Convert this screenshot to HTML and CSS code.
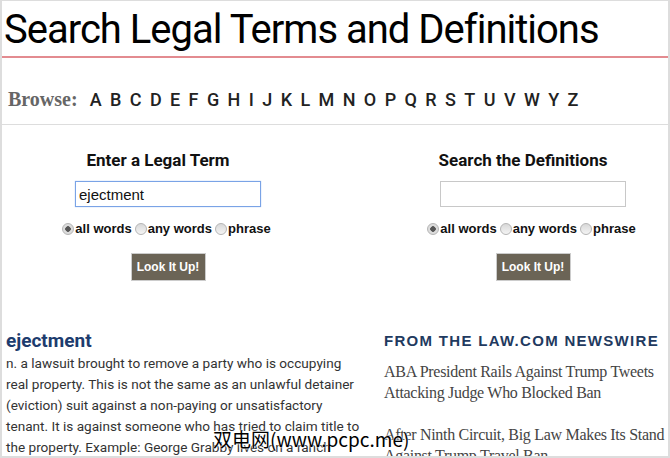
FILE: index.html
```html
<!DOCTYPE html>
<html lang="en">
<head>
    <meta charset="UTF-8">
    <title>Search Legal Terms and Definitions</title>
    <link rel="stylesheet" href="styles.css">
</head>
<body>
    <div class="page">
        <h1 class="title">Search Legal Terms and Definitions</h1>

        <div class="browse">
            <span class="browse-label">Browse:</span>
            <a href="#">A</a><a href="#">B</a><a href="#">C</a><a href="#">D</a><a href="#">E</a><a href="#">F</a><a href="#">G</a><a href="#">H</a><a href="#">I</a><a href="#">J</a><a href="#">K</a><a href="#">L</a><a href="#">M</a><a href="#">N</a><a href="#">O</a><a href="#">P</a><a href="#">Q</a><a href="#">R</a><a href="#">S</a><a href="#">T</a><a href="#">U</a><a href="#">V</a><a href="#">W</a><a href="#">Y</a><a href="#">Z</a>
        </div>

        <div class="search">
            <form class="search-box">
                <h3>Enter a Legal Term</h3>
                <input type="text" class="term-input focused" value="ejectment">
                <div class="options">
                    <label><input type="radio" name="t1" checked>all words</label>
                    <label><input type="radio" name="t1">any words</label>
                    <label><input type="radio" name="t1">phrase</label>
                </div>
                <button type="submit">Look It Up!</button>
            </form>
            <form class="search-box right">
                <h3>Search the Definitions</h3>
                <input type="text" class="term-input">
                <div class="options">
                    <label><input type="radio" name="t2" checked>all words</label>
                    <label><input type="radio" name="t2">any words</label>
                    <label><input type="radio" name="t2">phrase</label>
                </div>
                <button type="submit">Look It Up!</button>
            </form>
        </div>

        <div class="results">
            <div class="definition">
                <h2>ejectment</h2>
                <p>n. a lawsuit brought to remove a party who is occupying real property. This is not the same as an unlawful detainer (eviction) suit against a non-paying or unsatisfactory tenant. It is against someone who has tried to claim title to the property. Example: George Grabby lives on a ranch</p>
            </div>
            <div class="news">
                <h4>FROM THE LAW.COM NEWSWIRE</h4>
                <a href="#">ABA President Rails Against Trump Tweets Attacking Judge Who Blocked Ban</a>
                <a href="#">After Ninth Circuit, Big Law Makes Its Stand Against Trump Travel Ban</a>
            </div>
        </div>

        <span class="watermark">双电网(www.pcpc.me)</span>
    </div>
</body>
</html>
```

FILE: styles.css
```css
body {
    margin: 0;
    background: #fff;
    font-family: Roboto, Arial, sans-serif;
}
.page {
    position: relative;
    height: 455px;
    overflow: hidden;
    border-top: 1px solid #ddd;
    border-left: 2px solid #ddd;
    border-right: 2px solid #ddd;
    border-bottom: 2px solid #ddd;
}
.title {
    margin: 0;
    padding: 5px 0 0 2px;
    height: 50px;
    font-size: 40px;
    font-weight: 400;
    letter-spacing: -1px;
    color: #000;
    border-bottom: 2px solid #e38b90;
}
.browse {
    height: 50px;
    padding: 16px 0 0 6px;
    display: flex;
    align-items: center;
    border-bottom: 1px solid #ddd;
}
.browse-label {
    font-family: "Liberation Serif", serif;
    font-weight: bold;
    font-size: 20px;
    color: #666;
    margin-right: 12px;
}
.browse a {
    font-size: 18px;
    font-weight: 500;
    color: #222;
    text-decoration: none;
    margin-right: 8.4px;
}
.search {
    display: grid;
    grid-template-columns: 332px 1fr;
    padding-top: 24px;
    height: 170px;
}
.search-box {
    display: flex;
    flex-direction: column;
    align-items: center;
}
.search-box.right {
    padding-left: 64px;
}
.search-box h3 {
    margin: 0 20px 0 0;
    font-size: 17px;
    font-weight: 700;
    color: #111;
    line-height: 22px;
}
.term-input {
    box-sizing: border-box;
    width: 186px;
    height: 26px;
    margin-top: 10px;
    padding: 0 3px;
    border: 1px solid #c8c8c8;
    font-family: Arial, "Liberation Sans", sans-serif;
    font-size: 15px;
    color: #111;
    outline: none;
}
.term-input.focused {
    border-color: #7aa3e6;
    box-shadow: 0 0 1px #9bbdf0;
}
.options {
    display: flex;
    margin-top: 14px;
}
.options label {
    display: flex;
    align-items: center;
    font-family: Arial, "Liberation Sans", sans-serif;
    font-weight: bold;
    font-size: 13px;
    color: #111;
    margin-right: 3px;
}
.options input {
    appearance: none;
    width: 12px;
    height: 12px;
    margin: 0 1px 0 0;
    border: 1px solid #b5b5b5;
    border-radius: 50%;
    background: linear-gradient(#d8d8d8, #f4f4f4);
}
.options input:checked {
    background: radial-gradient(circle, #555 0 2.5px, #dcdcdc 3px);
}
.search-box button {
    margin-top: 17px;
    width: 75px;
    height: 28px;
    padding: 0;
    border: 1px solid #ccc;
    background: #6b6456;
    color: #fff;
    font-family: Arial, "Liberation Sans", sans-serif;
    font-weight: bold;
    font-size: 12px;
}
.results {
    display: grid;
    grid-template-columns: 356px 1fr;
    gap: 22px;
    padding: 10px 0 0 4px;
}
.definition h2 {
    margin: 0;
    font-size: 19px;
    font-weight: 700;
    color: #1d3c6e;
    line-height: 24px;
}
.definition p {
    margin: 0;
    font-size: 13.6px;
    line-height: 21px;
    color: #333;
}
.news h4 {
    margin: 2px 0 10px;
    font-family: Arial, "Liberation Sans", sans-serif;
    font-size: 15px;
    font-weight: bold;
    letter-spacing: 1.3px;
    white-space: nowrap;
    color: #1f3a60;
    line-height: 20px;
}
.news a {
    display: block;
    font-family: "Liberation Serif", serif;
    font-size: 16px;
    letter-spacing: -0.3px;
    line-height: 21px;
    color: #444;
    text-decoration: none;
    margin-bottom: 21px;
}
.watermark {
    position: absolute;
    left: 211px;
    top: 424px;
    font-family: "Noto Sans CJK SC", sans-serif;
    font-size: 19px;
    color: #000;
    text-shadow: 0 0 2px #fff, 0 0 2px #fff;
}
```
